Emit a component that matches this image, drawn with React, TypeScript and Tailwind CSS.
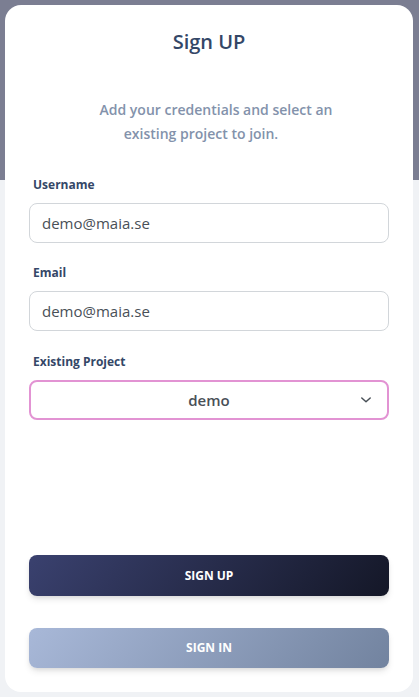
import React from "react";

export default function App() {
  const font = { fontFamily: '"Open Sans", "Noto Sans", sans-serif' };
  return (
    <div className="relative min-h-[697px] w-full bg-[#f0f2f5]" style={font}>
      <div className="absolute left-0 top-0 h-[180px] w-full bg-[#7b7e92]" />
      <div className="relative ml-[5px] mr-[6px] pt-[5px]">
        <div className="flex h-[687px] flex-col rounded-[16px] bg-white px-[24px]">
          <h1 className="mt-[23px] text-center text-[20px] font-semibold leading-[28px] text-[#344767]">
            Sign UP
          </h1>
          <p className="mt-[42px] text-center text-[14px] font-semibold leading-[24px] text-[#8392ab]">
            <span className="block pl-[14px]">Add your credentials and select an</span>
            <span className="block pr-[16px]">existing project to join.</span>
          </p>
          <label className="ml-[4px] mt-[30px] text-[12px] font-bold leading-[18px] text-[#344767]">
            Username
          </label>
          <div className="mt-[9px] flex h-[40px] items-center rounded-[8px] border border-[#d2d6da] px-[12px] text-[15px] text-[#495057]">
            demo@maia.se
          </div>
          <label className="ml-[4px] mt-[21px] text-[12px] font-bold leading-[18px] text-[#344767]">
            Email
          </label>
          <div className="mt-[9px] flex h-[40px] items-center rounded-[8px] border border-[#d2d6da] px-[12px] text-[15px] text-[#495057]">
            demo@maia.se
          </div>
          <label className="ml-[4px] mt-[22px] text-[12px] font-bold leading-[18px] text-[#344767]">
            Existing Project
          </label>
          <div className="relative mt-[9px] flex h-[40px] items-center justify-center rounded-[8px] border-2 border-[#e293d3] text-[15px] font-semibold text-[#495057]">
            demo
            <svg
              className="absolute right-[15px] top-1/2 -translate-y-1/2"
              width="12"
              height="8"
              viewBox="0 0 12 8"
              fill="none"
            >
              <path d="M1.8 2L6 5.8L10.2 2" stroke="#495057" strokeWidth="1.5" strokeLinecap="round" strokeLinejoin="round" />
            </svg>
          </div>
          <button className="mt-[135px] flex h-[41px] items-center justify-center rounded-[8px] bg-[linear-gradient(310deg,#141727,#3a416f)] text-[12px] font-bold text-white shadow-[0_4px_7px_-1px_rgba(0,0,0,0.11),0_2px_4px_-1px_rgba(0,0,0,0.07)]">
            SIGN UP
          </button>
          <button className="mt-[32px] flex h-[40px] items-center justify-center rounded-[8px] bg-[linear-gradient(310deg,#72839f,#a8b8d8)] text-[12px] font-bold text-white shadow-[0_4px_7px_-1px_rgba(0,0,0,0.11),0_2px_4px_-1px_rgba(0,0,0,0.07)]">
            SIGN IN
          </button>
        </div>
      </div>
    </div>
  );
}
